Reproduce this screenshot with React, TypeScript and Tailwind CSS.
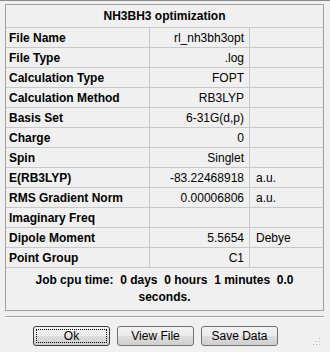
const rows: [string, string, string][] = [
  ["File Name", "rl_nh3bh3opt", ""],
  ["File Type", ".log", ""],
  ["Calculation Type", "FOPT", ""],
  ["Calculation Method", "RB3LYP", ""],
  ["Basis Set", "6-31G(d,p)", ""],
  ["Charge", "0", ""],
  ["Spin", "Singlet", ""],
  ["E(RB3LYP)", "-83.22468918", "a.u."],
  ["RMS Gradient Norm", "0.00006806", "a.u."],
  ["Imaginary Freq", "", ""],
  ["Dipole Moment", "5.5654", "Debye"],
  ["Point Group", "C1", ""],
]

function Btn({ label, focused }: { label: string; focused?: boolean }) {
  return (
    <button
      className={`relative w-[77px] h-[20px] rounded-[3px] border text-[12px] text-black bg-[linear-gradient(#f2f2f2_0%,#ebebeb_50%,#dddddd_51%,#cfcfcf_100%)] ${
        focused ? "border-[#3c3c3c]" : "border-[#707070]"
      }`}
    >
      {focused && <span className="absolute inset-[2px] border border-dotted border-black" />}
      <span className="relative">{label}</span>
    </button>
  )
}

export default function App() {
  return (
    <div
      className="w-[330px] h-[352px] bg-[#f0f0f0] border-t border-[#8a8a8a] relative text-black"
      style={{ fontFamily: '"Liberation Sans", Arial, sans-serif' }}
    >
      <div className="ml-[5px] mt-[3px] w-[319px] border border-[#a0a0a0] bg-[#f0f0f0]">
        <div className="h-[22px] flex items-center justify-center font-bold text-[12px]">
          NH3BH3 optimization
        </div>
        {rows.map(([k, v, u]) => (
          <div key={k} className="grid grid-cols-[144px_100px_1fr] h-[20px] border-t border-[#c8c8c8] text-[12px]">
            <div className="pl-[3px] font-bold flex items-center border-r border-[#c8c8c8]">{k}</div>
            <div className="pr-[5px] flex items-center justify-end border-r border-[#c8c8c8]">{v}</div>
            <div className="pl-[6px] flex items-center">{u}</div>
          </div>
        ))}
        <div className="border-t border-[#c8c8c8] h-[43px] pt-[4px] text-center font-bold text-[12px] leading-[17px] whitespace-pre">
          {"Job cpu time:  0 days  0 hours  1 minutes  0.0"}
          <br />
          {"seconds."}
        </div>
      </div>
      <div className="ml-[5px] mt-[5px] w-[319px] h-[2px] border-t border-[#a0a0a0] border-b border-b-white" />
      <div className="flex gap-[7px] pl-[33px] mt-[8px]">
        <Btn label="Ok" focused />
        <Btn label="View File" />
        <Btn label="Save Data" />
      </div>
      <svg className="absolute right-[9px] bottom-[6px]" width="8" height="8" viewBox="0 0 8 8">
        <g fill="#b8b8b8">
          <rect x="6" y="0" width="1" height="1" />
          <rect x="3" y="3" width="1" height="1" />
          <rect x="6" y="3" width="1" height="1" />
          <rect x="0" y="6" width="1" height="1" />
          <rect x="3" y="6" width="1" height="1" />
          <rect x="6" y="6" width="1" height="1" />
        </g>
      </svg>
    </div>
  )
}
